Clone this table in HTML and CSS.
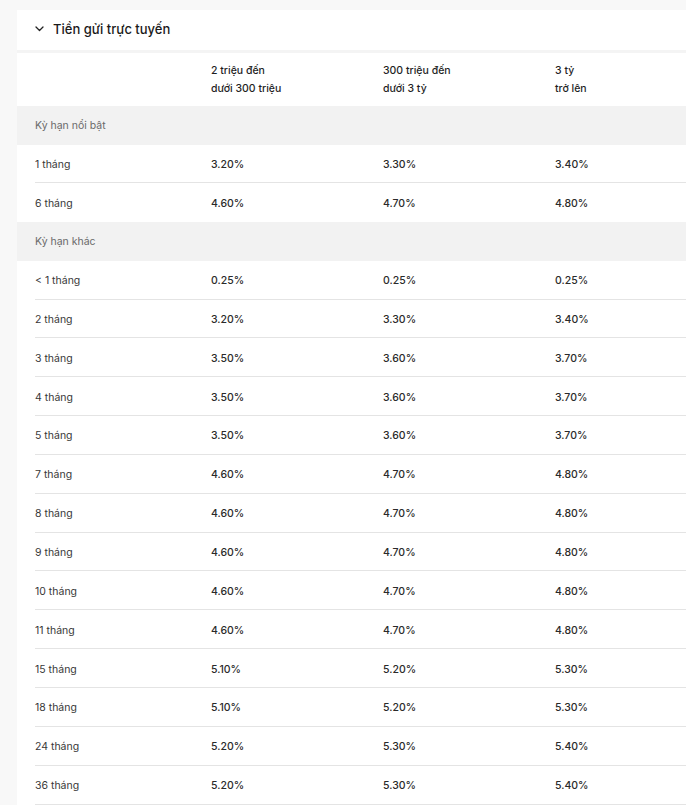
FILE: index.html
```html
<!DOCTYPE html>
<html lang="vi">
<head>
<meta charset="utf-8">
<link rel="stylesheet" href="styles.css">
</head>
<body>
<section class="card">
  <header class="card-head">
    <svg class="chev" width="9" height="6" viewBox="0 0 9 6"><path d="M1 1 L4.5 4.5 L8 1" fill="none" stroke="#222" stroke-width="1.3" stroke-linecap="round" stroke-linejoin="round"/></svg>
    <h2 class="title">Tiền gửi trực tuyến</h2>
  </header>
  <div class="table">
    <div class="row head"><span></span><span>2 triệu đến<br>dưới 300 triệu</span><span>300 triệu đến<br>dưới 3 tỷ</span><span>3 tỷ<br>trở lên</span></div>
    <div class="band">Kỳ hạn nổi bật</div>
    <div class="row"><span class="lbl">1 tháng</span><span>3.20%</span><span>3.30%</span><span>3.40%</span></div>
    <div class="row last"><span class="lbl">6 tháng</span><span>4.60%</span><span>4.70%</span><span>4.80%</span></div>
    <div class="band">Kỳ hạn khác</div>
    <div class="row"><span class="lbl">&lt; 1 tháng</span><span>0.25%</span><span>0.25%</span><span>0.25%</span></div>
    <div class="row"><span class="lbl">2 tháng</span><span>3.20%</span><span>3.30%</span><span>3.40%</span></div>
    <div class="row"><span class="lbl">3 tháng</span><span>3.50%</span><span>3.60%</span><span>3.70%</span></div>
    <div class="row"><span class="lbl">4 tháng</span><span>3.50%</span><span>3.60%</span><span>3.70%</span></div>
    <div class="row"><span class="lbl">5 tháng</span><span>3.50%</span><span>3.60%</span><span>3.70%</span></div>
    <div class="row"><span class="lbl">7 tháng</span><span>4.60%</span><span>4.70%</span><span>4.80%</span></div>
    <div class="row"><span class="lbl">8 tháng</span><span>4.60%</span><span>4.70%</span><span>4.80%</span></div>
    <div class="row"><span class="lbl">9 tháng</span><span>4.60%</span><span>4.70%</span><span>4.80%</span></div>
    <div class="row"><span class="lbl">10 tháng</span><span>4.60%</span><span>4.70%</span><span>4.80%</span></div>
    <div class="row"><span class="lbl">11 tháng</span><span>4.60%</span><span>4.70%</span><span>4.80%</span></div>
    <div class="row"><span class="lbl">15 tháng</span><span>5.10%</span><span>5.20%</span><span>5.30%</span></div>
    <div class="row"><span class="lbl">18 tháng</span><span>5.10%</span><span>5.20%</span><span>5.30%</span></div>
    <div class="row"><span class="lbl">24 tháng</span><span>5.20%</span><span>5.30%</span><span>5.40%</span></div>
    <div class="row"><span class="lbl">36 tháng</span><span>5.20%</span><span>5.30%</span><span>5.40%</span></div>
  </div>
</section>
</body>
</html>
```

FILE: styles.css
```css
html, body {
  margin: 0;
  padding: 0;
  background: #f8f8f8;
  overflow: hidden;
}
body {
  font-family: Inter, "Noto Sans", sans-serif;
  color: #222;
  padding: 10px 0 0 17px;
}
.card {
  background: #fff;
}
.card-head {
  display: flex;
  align-items: center;
  height: 43px;
  padding: 0 0 2px 18px;
  gap: 9px;
  box-sizing: border-box;
  border-bottom: 3px solid #f4f4f4;
}
.chev {
  display: block;
}
.title {
  margin: 0;
  font-size: 13px;
  font-weight: 500;
  color: #1a1a1a;
}
.row {
  display: grid;
  grid-template-columns: 176px 172px 172px 1fr;
  margin-left: 18px;
  height: 38.85px;
  padding-top: 2px;
  box-sizing: border-box;
  align-items: center;
  border-bottom: 1px solid #e4e4e4;
  font-size: 10.5px;
  color: #2a2a2a;
}
.row span {
  font-weight: 500;
}
.row .lbl {
  font-weight: 400;
  color: #383838;
}
.row.last {
  border-bottom: none;
}
.row.head {
  height: 53px;
  padding-top: 1px;
  border-bottom: none;
  line-height: 18px;
  color: #1f1f1f;
}
.band {
  height: 38.5px;
  background: #f2f2f2;
  display: flex;
  align-items: center;
  padding-left: 18px;
  font-size: 10.5px;
  color: #6a6a6a;
}
```
